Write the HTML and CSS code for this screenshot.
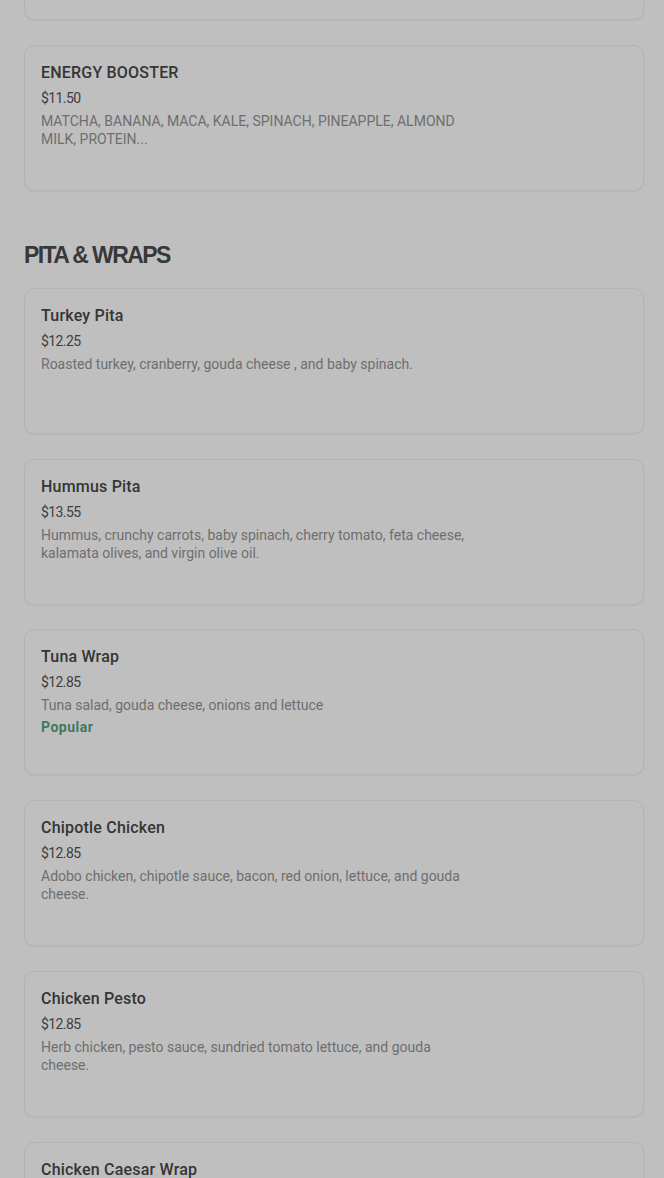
FILE: index.html
```html
<!DOCTYPE html>
<html>
<head>
<meta charset="utf-8">
<link rel="stylesheet" href="styles.css">
</head>
<body>
<div class="page">
  <div class="list first">
    <div class="card"></div>
    <div class="card">
      <div class="title">ENERGY BOOSTER</div>
      <div class="price">$11.50</div>
      <div class="desc">MATCHA, BANANA, MACA, KALE, SPINACH, PINEAPPLE, ALMOND MILK, PROTEIN...</div>
    </div>
  </div>

  <h2 class="section-title">PITA &amp; WRAPS</h2>
  <div class="list">
    <div class="card">
      <div class="title">Turkey Pita</div>
      <div class="price">$12.25</div>
      <div class="desc">Roasted turkey, cranberry, gouda cheese , and baby spinach.</div>
    </div>
    <div class="card">
      <div class="title">Hummus Pita</div>
      <div class="price">$13.55</div>
      <div class="desc">Hummus, crunchy carrots, baby spinach, cherry tomato, feta cheese, kalamata olives, and virgin olive oil.</div>
    </div>
    <div class="card">
      <div class="title">Tuna Wrap</div>
      <div class="price">$12.85</div>
      <div class="desc">Tuna salad, gouda cheese, onions and lettuce</div>
      <div class="tag">Popular</div>
    </div>
    <div class="card">
      <div class="title">Chipotle Chicken</div>
      <div class="price">$12.85</div>
      <div class="desc">Adobo chicken, chipotle sauce, bacon, red onion, lettuce, and gouda cheese.</div>
    </div>
    <div class="card">
      <div class="title">Chicken Pesto</div>
      <div class="price">$12.85</div>
      <div class="desc">Herb chicken, pesto sauce, sundried tomato lettuce, and gouda cheese.</div>
    </div>
    <div class="card">
      <div class="title">Chicken Caesar Wrap</div>
    </div>
  </div>
</div>
</body>
</html>
```
FILE: styles.css
```css
html, body {
  margin: 0;
  padding: 0;
  background: #bfbfbf;
  overflow: hidden;
}
body {
  font-family: "Roboto", "Liberation Sans", sans-serif;
  color: #2f2f2f;
}
.page {
  padding: 0 20px 0 24px;
}
.list {
  display: flex;
  flex-direction: column;
  gap: 24.8px;
}
.first {
  margin-top: -126px;
}
.card {
  box-sizing: border-box;
  min-height: 146px;
  padding: 16px;
  border: 1px solid #b4b4b4;
  border-radius: 10px;
  box-shadow: 0 1px 2px rgba(0, 0, 0, 0.05);
  background: #bfbfbf;
}
.title {
  font-size: 16px;
  line-height: 22px;
  font-weight: 500;
  color: #353535;
  letter-spacing: 0.2px;
}
.price {
  margin-top: 4px;
  font-size: 14px;
  line-height: 20px;
  color: #3e3e3e;
  letter-spacing: -0.6px;
}
.desc {
  margin-top: 4px;
  max-width: 440px;
  font-size: 14px;
  line-height: 18px;
  color: #6e6e6e;
  letter-spacing: 0;
}
.tag {
  margin-top: 3px;
  font-size: 14px;
  line-height: 20px;
  font-weight: 700;
  color: #3f7a5c;
  letter-spacing: 0.5px;
}
.section-title {
  margin: 48px 0 17px;
  font-family: "Liberation Sans", "Roboto", sans-serif;
  font-size: 23px;
  line-height: 32px;
  font-weight: 700;
  letter-spacing: -1.6px;
  color: #383838;
}
```
